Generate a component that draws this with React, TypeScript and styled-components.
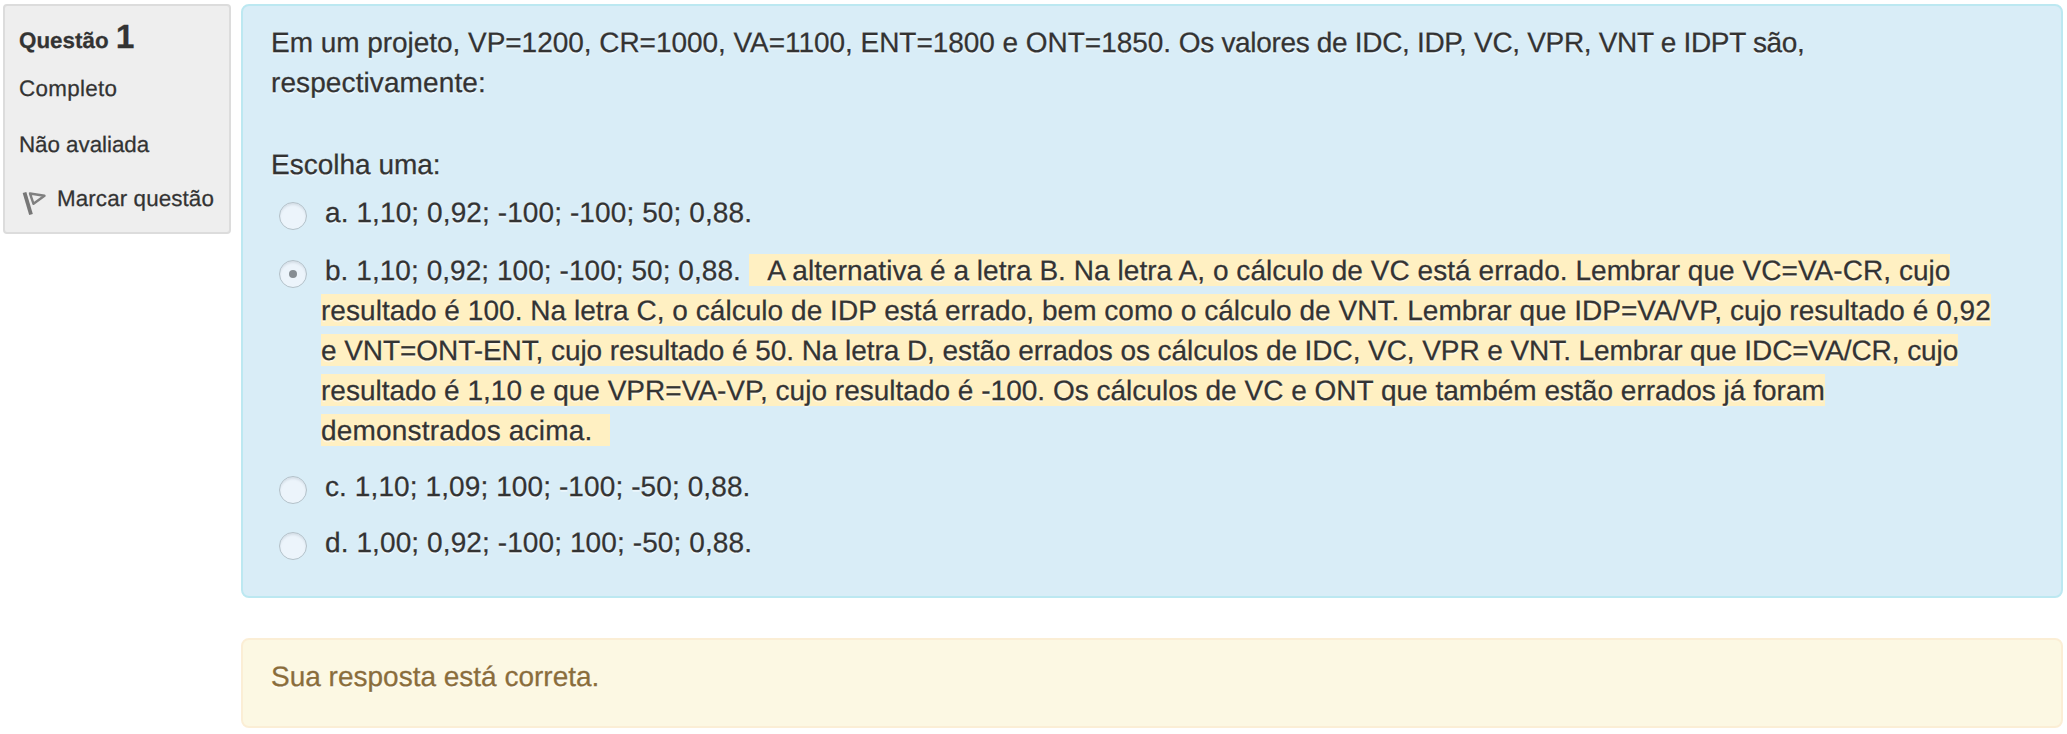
import React from "react";
import styled, { createGlobalStyle } from "styled-components";

const GlobalStyle = createGlobalStyle`
  *, *::before, *::after { box-sizing: border-box; }
  body {
    margin: 0;
    background: #fff;
    color: #333;
    font-family: "Liberation Sans", Arial, Helvetica, sans-serif;
    font-size: 28px;
    line-height: 40px;
    text-rendering: geometricPrecision;
    -webkit-text-stroke: 0.25px currentColor;
  }
`;

const Page = styled.main`
  display: flex;
  align-items: flex-start;
  gap: 10px;
  padding: 4px 4px 0 3px;
`;

const InfoCard = styled.aside`
  flex: none;
  display: flex;
  flex-direction: column;
  width: 228px;
  height: 230px;
  padding: 12px 0 0 14px;
  background: #eee;
  border: 2px solid #dcdcdc;
  border-radius: 4px;
  font-size: 22.4px;
  line-height: 32px;
  white-space: nowrap;
`;

const QuestionTitle = styled.h3`
  margin: 0;
  height: 40px;
  font-size: 22.4px;
  line-height: 40px;
  font-weight: bold;
`;

const QuestionNumber = styled.span`
  margin-left: 1px;
  font-size: 33.6px;
`;

const InfoLine = styled.div<{ $gap: number; $spacing?: number }>`
  margin-top: ${(p) => p.$gap}px;
  height: 32px;
  letter-spacing: ${(p) => p.$spacing ?? 0}px;
`;

const FlagLine = styled(InfoLine)`
  display: flex;
`;

const FlagIcon = styled.svg`
  flex: none;
  width: 32px;
  height: 32px;
  margin: 5px 6px 0 0;
`;

const Content = styled.section`
  flex: 1;
  display: flex;
  flex-direction: column;
  gap: 40px;
`;

const Panel = styled.div<{ $tone: "info" | "warning" }>`
  border: 2px solid ${(p) => (p.$tone === "info" ? "#bce8f1" : "#fbeed5")};
  background: ${(p) => (p.$tone === "info" ? "#d9edf7" : "#fcf8e3")};
  color: ${(p) => (p.$tone === "info" ? "#333" : "#8a6d3b")};
  height: ${(p) => (p.$tone === "info" ? 594 : 90)}px;
  border-radius: 8px;
  padding: 17px 28px 0;
  text-shadow: 0 2px 0 rgba(255, 255, 255, 0.5);
`;

const Tracked = styled.span<{ $spacing: number }>`
  letter-spacing: ${(p) => p.$spacing}px;
`;

const Line = styled.span<{ $spacing?: number }>`
  display: block;
  white-space: nowrap;
  letter-spacing: ${(p) => p.$spacing ?? 0}px;
`;

const Prompt = styled.p`
  margin: 0 0 42px;
`;

const Choices = styled.div`
  display: flex;
  flex-direction: column;
  gap: 16px;
  padding: 8px 0 0 8px;
`;

const Choice = styled.label<{ $after?: number }>`
  display: flex;
  margin-bottom: ${(p) => p.$after ?? 0}px;
`;

const Radio = styled.span`
  flex: none;
  display: flex;
  align-items: center;
  justify-content: center;
  width: 28px;
  height: 28px;
  margin: 9px 14px 0 0;
  border: 1px solid #b3c1c9;
  border-radius: 50%;
  background: #ecf4fb;
  box-shadow: inset 0 2px 2px rgba(120, 140, 155, 0.18);
`;

const Dot = styled.span`
  width: 8px;
  height: 8px;
  border-radius: 50%;
  background: #868d93;
`;

const ChoiceText = styled.div`
  text-indent: 4px;
  letter-spacing: 0.1px;
`;

const NextLine = styled(Line)`
  text-indent: 0;
`;

const Feedback = styled.mark<{ $lead?: boolean; $last?: boolean }>`
  background: #fff0c2;
  color: inherit;
  padding-top: 1px;
  padding-left: ${(p) => (p.$lead ? 3 : 0)}px;
  padding-right: ${(p) => (p.$last ? 2 : 0)}px;
`;

const feedbackLines = [
  { text: "resultado é 100. Na letra C, o cálculo de IDP está errado, bem como o cálculo de VNT. Lembrar que IDP=VA/VP, cujo resultado é 0,92", spacing: 0.04 },
  { text: "e VNT=ONT-ENT, cujo resultado é 50. Na letra D, estão errados os cálculos de IDC, VC, VPR e VNT. Lembrar que IDC=VA/CR, cujo", spacing: -0.07 },
  { text: "resultado é 1,10 e que VPR=VA-VP, cujo resultado é -100. Os cálculos de VC e ONT que também estão errados já foram", spacing: 0.01 },
  { text: "demonstrados acima.\u00a0\u00a0", spacing: 0.2 },
];

export default function App() {
  return (
    <>
      <GlobalStyle />
      <Page>
        <InfoCard>
          <QuestionTitle>
            Questão <QuestionNumber>1</QuestionNumber>
          </QuestionTitle>
          <InfoLine $gap={15} $spacing={0.3}>Completo</InfoLine>
          <InfoLine $gap={24} $spacing={-0.05}>Não avaliada</InfoLine>
          <FlagLine $gap={22} $spacing={0.1}>
            <FlagIcon viewBox="0 0 32 32" fill="none" strokeLinejoin="round">
              <path d="M5.5 4.5L12 26.5" stroke="#777" strokeWidth="3.8" />
              <path d="M11 5.5L25.5 7.7L14.5 15.8Z" stroke="#808080" strokeWidth="2.4" />
            </FlagIcon>
            Marcar questão
          </FlagLine>
        </InfoCard>
        <Content>
          <Panel $tone="info">
            <Prompt>
              <Line>
                <Tracked $spacing={-0.04}>Em um projeto, VP=1200, CR=1000, VA=1100, ENT=1800 e ONT=1850. </Tracked>
                <Tracked $spacing={-0.32}>Os valores de IDC, IDP, VC, VPR, VNT e IDPT são,</Tracked>
              </Line>
              <Line $spacing={0.1}>respectivamente:</Line>
            </Prompt>
            <Line>Escolha uma:</Line>
            <Choices>
              <Choice $after={2}>
                <Radio />
                <ChoiceText>a. 1,10; 0,92; -100; -100; 50; 0,88.</ChoiceText>
              </Choice>
              <Choice>
                <Radio>
                  <Dot />
                </Radio>
                <ChoiceText>
                  <Line $spacing={0.05}>
                    b. 1,10; 0,92; 100; -100; 50; 0,88.{" "}
                    <Feedback $lead>
                      {"\u00a0\u00a0"}A alternativa é a letra B. Na letra A, o cálculo de VC está errado. Lembrar que VC=VA-CR, cujo
                    </Feedback>
                  </Line>
                  {feedbackLines.map((line, i) => (
                    <NextLine key={line.text} $spacing={line.spacing}>
                      <Feedback $last={i === feedbackLines.length - 1}>{line.text}</Feedback>
                    </NextLine>
                  ))}
                </ChoiceText>
              </Choice>
              <Choice>
                <Radio />
                <ChoiceText>c. 1,10; 1,09; 100; -100; -50; 0,88.</ChoiceText>
              </Choice>
              <Choice>
                <Radio />
                <ChoiceText>d. 1,00; 0,92; -100; 100; -50; 0,88.</ChoiceText>
              </Choice>
            </Choices>
          </Panel>
          <Panel $tone="warning">Sua resposta está correta.</Panel>
        </Content>
      </Page>
    </>
  );
}
